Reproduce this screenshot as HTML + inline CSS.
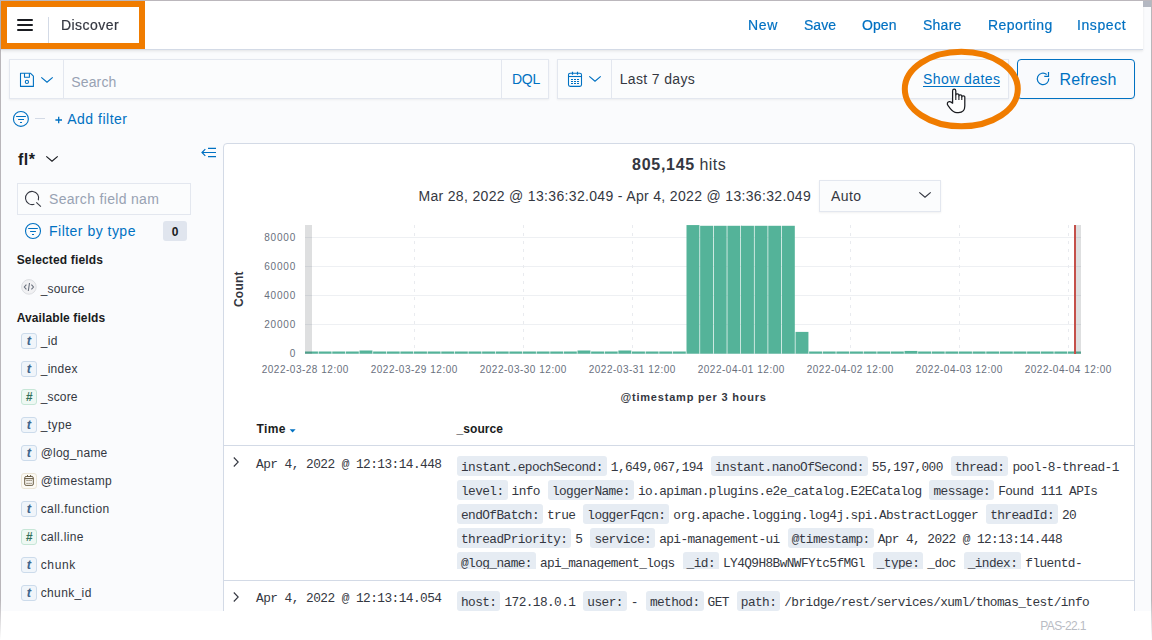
<!DOCTYPE html>
<html><head><meta charset="utf-8"><style>
html,body{margin:0;padding:0;}
body{width:1152px;height:640px;overflow:hidden;position:relative;background:#fafbfd;font-family:'Liberation Sans', sans-serif;}
.t{position:absolute;white-space:pre;line-height:1;}
svg{position:absolute;overflow:visible;}
</style></head><body>
<div style="position:absolute;left:0px;top:0px;width:1152px;height:1px;background:#bcb8bd"></div>
<div style="position:absolute;left:0px;top:0px;width:1px;height:640px;background:linear-gradient(to bottom,#b9b6ba 0,#b9b6ba 600px,#ffffff 640px)"></div>
<div style="position:absolute;left:1151px;top:0px;width:1px;height:640px;background:linear-gradient(to bottom,#b9b6ba 0,#b9b6ba 600px,#ffffff 640px)"></div>
<div style="position:absolute;left:1px;top:1px;width:1142px;height:48px;background:#fff;border-bottom:1px solid #d3dae6;box-shadow:0 1px 2px rgba(0,0,0,.06),0 2px 3px rgba(0,0,0,.03)"></div>
<div style="position:absolute;left:1143px;top:1px;width:8px;height:6px;background:#b4b8c2"></div>
<div style="position:absolute;left:1px;top:1px;width:144px;height:48px;border:6px solid #f07c00;box-sizing:border-box"></div>
<div style="position:absolute;left:17px;top:19px;width:16px;height:2px;background:#1a1c21;border-radius:1px"></div>
<div style="position:absolute;left:17px;top:24px;width:16px;height:2px;background:#1a1c21;border-radius:1px"></div>
<div style="position:absolute;left:17px;top:29px;width:16px;height:2px;background:#1a1c21;border-radius:1px"></div>
<div style="position:absolute;left:48px;top:17px;width:1px;height:26px;background:#d3dae6"></div>
<div style="position:absolute;left:9px;top:59px;width:540px;height:40px;background:#fbfcfd;box-sizing:border-box;border:1px solid #e3e7ef;box-shadow:0 1px 2px rgba(0,0,0,.06)"></div>
<div style="position:absolute;left:63px;top:60px;width:1px;height:38px;background:#e3e7ef"></div>
<div style="position:absolute;left:501px;top:60px;width:1px;height:38px;background:#e3e7ef"></div>
<svg style="left:19px;top:72px;" width="16" height="16" viewBox="0 0 16 16"><g fill="none" stroke="#0071c2" stroke-width="1.1" stroke-linejoin="round"><path d="M1.5 1.3H11.6L14.4 4.1V14.4H1.5Z"/><path d="M5.5 1.3V5.2H10.4V1.3"/><circle cx="7.9" cy="9.9" r="1.6"/></g></svg>
<svg style="left:40px;top:76px;" width="14" height="8" viewBox="0 0 14 8"><path d="M1.3 1.4L7 6.3L12.7 1.4" fill="none" stroke="#0071c2" stroke-width="1.2"/></svg>
<div style="position:absolute;left:557px;top:59px;width:452px;height:40px;background:#fbfcfd;box-sizing:border-box;border:1px solid #e3e7ef;box-shadow:0 1px 2px rgba(0,0,0,.06)"></div>
<div style="position:absolute;left:611px;top:60px;width:1px;height:38px;background:#e3e7ef"></div>
<svg style="left:567px;top:71px;" width="16" height="17" viewBox="0 0 16 17"><g fill="none" stroke="#0071c2" stroke-width="1.1"><rect x="1.5" y="2.3" width="13" height="13.1" rx="1.6"/><path d="M1.5 5.5H14.5"/><path d="M5.5 0.8V3.8M10.5 0.8V3.8" stroke-width="1.2"/></g><g fill="#0071c2"><rect x="4" y="8" width="2" height="1"/><rect x="7" y="8" width="2" height="1"/><rect x="10" y="8" width="2" height="1"/><rect x="4" y="10" width="2" height="1"/><rect x="7" y="10" width="2" height="1"/><rect x="10" y="10" width="2" height="1"/><rect x="4" y="12" width="2" height="1"/><rect x="7" y="12" width="2" height="1"/><rect x="10" y="12" width="2" height="1"/></g></svg>
<svg style="left:588px;top:75px;" width="14" height="8" viewBox="0 0 14 8"><path d="M1.3 1.4L7 6.3L12.7 1.4" fill="none" stroke="#0071c2" stroke-width="1.2"/></svg>
<div style="position:absolute;left:923px;top:86px;width:77px;height:1px;background:#0071c2"></div>
<div style="position:absolute;left:1017px;top:59px;width:118px;height:40px;border:1px solid #0071c2;border-radius:4px;box-sizing:border-box;background:#f9fafd;box-shadow:0 1px 2px rgba(0,0,0,.06)"></div>
<svg style="left:1035px;top:70px;" width="16" height="16" viewBox="0 0 16 16"><g fill="none" stroke="#0071c2" stroke-width="1.2"><path d="M11.7 4.5A5.75 5.75 0 1 0 13.73 8.4"/><path d="M9.25 6.4H13.5V2.1"/></g></svg>
<svg style="left:12px;top:110px;" width="18" height="18" viewBox="0 0 18 18"><g fill="none" stroke="#0071c2" stroke-width="1.1"><circle cx="8.9" cy="8.9" r="7.45"/><path d="M4.1 6.5H13.9M6.1 9.5H12M8 12.5H10"/></g></svg>
<div style="position:absolute;left:35px;top:118px;width:10px;height:1px;background:#d3dae6"></div>
<svg style="left:54px;top:115px;" width="10" height="10" viewBox="0 0 10 10"><path d="M1.4 5H8M4.7 1.7V8.3" fill="none" stroke="#0071c2" stroke-width="1.3"/></svg>
<svg style="left:45px;top:155px;" width="14" height="8" viewBox="0 0 14 8"><path d="M1.3 1.4L7 6.3L12.7 1.4" fill="none" stroke="#1a1c21" stroke-width="1.2"/></svg>
<svg style="left:200px;top:146px;" width="18" height="13" viewBox="0 0 18 13"><g fill="none" stroke="#0071c2" stroke-width="1.2"><path d="M8 2.3H16M2 6.5H16M8 10.6H16"/><path d="M5.3 3.2L2 6.5L5.3 9.8"/></g></svg>
<div style="position:absolute;left:17px;top:183px;width:174px;height:32px;background:#fbfcfd;box-sizing:border-box;border:1px solid #e3e7ef"></div>
<svg style="left:24px;top:190px;" width="18" height="18" viewBox="0 0 18 18"><g fill="none" stroke="#343741" stroke-width="1.1"><path d="M10.36 14.2A6.6 6.6 0 1 1 14.3 10.26"/><path d="M12.3 12.3L16.9 16.7"/></g></svg>
<svg style="left:24px;top:222px;" width="18" height="18" viewBox="0 0 18 18"><g fill="none" stroke="#0071c2" stroke-width="1.1"><circle cx="9" cy="9" r="7.5"/><path d="M4.2 6.5H13.8M6.1 9.5H11.9M8 12.5H10"/></g></svg>
<div style="position:absolute;left:163px;top:221px;width:24px;height:20px;background:#e0e5ee;border-radius:3px"></div>
<svg style="left:20px;top:278px;" width="18" height="18" viewBox="0 0 18 18"><circle cx="8.9" cy="8.9" r="7.3" fill="#f1f1f3" stroke="#dcdee2" stroke-width="1"/><g fill="none" stroke="#69707d" stroke-width="1.1"><path d="M6.4 6.6L4.3 9L6.4 11.4M11.4 6.6L13.5 9L11.4 11.4M9.5 5L8.3 13"/></g></svg>
<div style="position:absolute;left:21px;top:333px;width:16px;height:16px;background:#f0f5fa;border:1px solid #ccdbeb;border-radius:3px;box-sizing:border-box"></div>
<div style="position:absolute;left:21px;top:361px;width:16px;height:16px;background:#f0f5fa;border:1px solid #ccdbeb;border-radius:3px;box-sizing:border-box"></div>
<div style="position:absolute;left:21px;top:389px;width:16px;height:16px;background:#eef8f3;border:1px solid #c6e6d7;border-radius:3px;box-sizing:border-box"></div>
<div style="position:absolute;left:21px;top:417px;width:16px;height:16px;background:#f0f5fa;border:1px solid #ccdbeb;border-radius:3px;box-sizing:border-box"></div>
<div style="position:absolute;left:21px;top:445px;width:16px;height:16px;background:#f0f5fa;border:1px solid #ccdbeb;border-radius:3px;box-sizing:border-box"></div>
<div style="position:absolute;left:21px;top:473px;width:16px;height:16px;background:#fbf9f4;border:1px solid #ebe4d4;border-radius:3px;box-sizing:border-box"></div>
<svg style="left:21px;top:473px;" width="16" height="16" viewBox="0 0 16 16"><g fill="none" stroke="#6b5e47" stroke-width="1"><rect x="3.7" y="3.5" width="8.6" height="8.9" rx="1.4"/><path d="M3.7 5.6H12.3" stroke-width="1.1"/><path d="M6.5 2V4M9.6 2V4"/></g><g fill="#6b5e47"><rect x="5.5" y="7" width="1.1" height="1.1"/><rect x="7.5" y="7" width="1.1" height="1.1"/><rect x="9.5" y="7" width="1.1" height="1.1"/><rect x="5.5" y="9.8" width="1.1" height="1.1"/><rect x="7.5" y="9.8" width="1.1" height="1.1"/><rect x="9.5" y="9.8" width="1.1" height="1.1"/></g></svg>
<div style="position:absolute;left:21px;top:501px;width:16px;height:16px;background:#f0f5fa;border:1px solid #ccdbeb;border-radius:3px;box-sizing:border-box"></div>
<div style="position:absolute;left:21px;top:529px;width:16px;height:16px;background:#eef8f3;border:1px solid #c6e6d7;border-radius:3px;box-sizing:border-box"></div>
<div style="position:absolute;left:21px;top:557px;width:16px;height:16px;background:#f0f5fa;border:1px solid #ccdbeb;border-radius:3px;box-sizing:border-box"></div>
<div style="position:absolute;left:21px;top:585px;width:16px;height:16px;background:#f0f5fa;border:1px solid #ccdbeb;border-radius:3px;box-sizing:border-box"></div>
<div style="position:absolute;left:223px;top:143px;width:912px;height:520px;background:#fff;border:1px solid #d3dae6;border-radius:4px;box-sizing:border-box"></div>
<div style="position:absolute;left:819px;top:180px;width:122px;height:32px;background:#fbfcfd;box-sizing:border-box;border:1px solid #e3e7ef;box-shadow:0 1px 2px rgba(0,0,0,.06)"></div>
<svg style="left:918px;top:191px;" width="14" height="8" viewBox="0 0 14 8"><path d="M1.3 1.4L7 6.3L12.7 1.4" fill="none" stroke="#343741" stroke-width="1.2"/></svg>
<div style="position:absolute;left:305px;top:324.0px;width:776px;height:1px;background:#eef0f3"></div>
<div style="position:absolute;left:305px;top:295.0px;width:776px;height:1px;background:#eef0f3"></div>
<div style="position:absolute;left:305px;top:266.0px;width:776px;height:1px;background:#eef0f3"></div>
<div style="position:absolute;left:305px;top:237.0px;width:776px;height:1px;background:#eef0f3"></div>
<div style="position:absolute;left:305px;top:353px;width:776px;height:1px;background:#eef0f3"></div>
<div style="position:absolute;left:413.5px;top:225px;width:1px;height:128px;background:repeating-linear-gradient(to bottom,#e9ebef 0 3px,transparent 3px 8px)"></div>
<div style="position:absolute;left:522.5px;top:225px;width:1px;height:128px;background:repeating-linear-gradient(to bottom,#e9ebef 0 3px,transparent 3px 8px)"></div>
<div style="position:absolute;left:631.5px;top:225px;width:1px;height:128px;background:repeating-linear-gradient(to bottom,#e9ebef 0 3px,transparent 3px 8px)"></div>
<div style="position:absolute;left:740.5px;top:225px;width:1px;height:128px;background:repeating-linear-gradient(to bottom,#e9ebef 0 3px,transparent 3px 8px)"></div>
<div style="position:absolute;left:849.5px;top:225px;width:1px;height:128px;background:repeating-linear-gradient(to bottom,#e9ebef 0 3px,transparent 3px 8px)"></div>
<div style="position:absolute;left:958.5px;top:225px;width:1px;height:128px;background:repeating-linear-gradient(to bottom,#e9ebef 0 3px,transparent 3px 8px)"></div>
<div style="position:absolute;left:1067.5px;top:225px;width:1px;height:128px;background:repeating-linear-gradient(to bottom,#e9ebef 0 3px,transparent 3px 8px)"></div>
<svg style="left:300px;top:220px;" width="790" height="140" viewBox="0 0 790 140"><g fill="#54b399"><rect x="5.00" y="131.50" width="12.93" height="2.20"/><rect x="18.62" y="131.50" width="12.93" height="2.20"/><rect x="32.25" y="131.50" width="12.93" height="2.20"/><rect x="45.88" y="131.50" width="12.93" height="2.20"/><rect x="59.50" y="130.50" width="12.93" height="3.20"/><rect x="73.12" y="131.50" width="12.93" height="2.20"/><rect x="86.75" y="131.50" width="12.93" height="2.20"/><rect x="100.38" y="131.50" width="12.93" height="2.20"/><rect x="114.00" y="131.50" width="12.93" height="2.20"/><rect x="127.62" y="131.50" width="12.93" height="2.20"/><rect x="141.25" y="131.50" width="12.93" height="2.20"/><rect x="154.88" y="131.50" width="12.93" height="2.20"/><rect x="168.50" y="131.50" width="12.93" height="2.20"/><rect x="182.12" y="131.50" width="12.93" height="2.20"/><rect x="195.75" y="131.50" width="12.93" height="2.20"/><rect x="209.38" y="131.50" width="12.93" height="2.20"/><rect x="223.00" y="131.50" width="12.93" height="2.20"/><rect x="236.62" y="131.50" width="12.93" height="2.20"/><rect x="250.25" y="131.50" width="12.93" height="2.20"/><rect x="263.88" y="131.50" width="12.93" height="2.20"/><rect x="277.50" y="130.50" width="12.93" height="3.20"/><rect x="291.12" y="131.50" width="12.93" height="2.20"/><rect x="304.75" y="131.50" width="12.93" height="2.20"/><rect x="318.38" y="130.50" width="12.93" height="3.20"/><rect x="332.00" y="131.50" width="12.93" height="2.20"/><rect x="345.62" y="131.50" width="12.93" height="2.20"/><rect x="359.25" y="131.50" width="12.93" height="2.20"/><rect x="372.88" y="131.50" width="12.93" height="2.20"/><rect x="386.50" y="5.07" width="12.93" height="128.63"/><rect x="400.12" y="5.79" width="12.93" height="127.91"/><rect x="413.75" y="5.79" width="12.93" height="127.91"/><rect x="427.38" y="5.79" width="12.93" height="127.91"/><rect x="441.00" y="5.79" width="12.93" height="127.91"/><rect x="454.62" y="5.79" width="12.93" height="127.91"/><rect x="468.25" y="5.79" width="12.93" height="127.91"/><rect x="481.88" y="5.79" width="12.93" height="127.91"/><rect x="495.50" y="111.90" width="12.93" height="21.80"/><rect x="509.12" y="131.50" width="12.93" height="2.20"/><rect x="522.75" y="131.50" width="12.93" height="2.20"/><rect x="536.38" y="131.50" width="12.93" height="2.20"/><rect x="550.00" y="131.50" width="12.93" height="2.20"/><rect x="563.62" y="131.50" width="12.93" height="2.20"/><rect x="577.25" y="131.50" width="12.93" height="2.20"/><rect x="590.88" y="131.50" width="12.93" height="2.20"/><rect x="604.50" y="130.94" width="12.93" height="2.76"/><rect x="618.12" y="131.50" width="12.93" height="2.20"/><rect x="631.75" y="131.50" width="12.93" height="2.20"/><rect x="645.38" y="131.50" width="12.93" height="2.20"/><rect x="659.00" y="131.50" width="12.93" height="2.20"/><rect x="672.62" y="131.50" width="12.93" height="2.20"/><rect x="686.25" y="131.50" width="12.93" height="2.20"/><rect x="699.88" y="131.50" width="12.93" height="2.20"/><rect x="713.50" y="131.50" width="12.93" height="2.20"/><rect x="727.12" y="131.50" width="12.93" height="2.20"/><rect x="740.75" y="131.50" width="12.93" height="2.20"/><rect x="754.38" y="131.50" width="12.93" height="2.20"/><rect x="768.00" y="131.50" width="12.93" height="2.20"/></g></svg>
<div style="position:absolute;left:305px;top:225px;width:7px;height:129px;background:rgba(52,55,65,.16)"></div>
<div style="position:absolute;left:1076px;top:225px;width:5px;height:129px;background:rgba(52,55,65,.16)"></div>
<div style="position:absolute;left:1074px;top:225px;width:2px;height:129px;background:#c4504a"></div>
<svg style="left:288px;top:427px;" width="10" height="8" viewBox="0 0 10 8"><path d="M1.6 2.2H7.6L4.6 5.6Z" fill="#0071c2"/></svg>
<div style="position:absolute;left:224px;top:445px;width:910px;height:1px;background:#d3dae6"></div>
<div style="position:absolute;left:457px;top:456px;width:676px;height:113px;overflow:hidden;font-family:'Liberation Mono',monospace;font-size:12.8px;letter-spacing:-0.590px;color:#343741;"><div style="position:absolute;left:0;top:0px;white-space:pre;height:20px"><span style="display:inline-block;vertical-align:top;height:20px;line-height:24.6px;padding:0 4px;margin-right:4px;background:#e6ecf3;border-radius:3px">instant.epochSecond:</span><span style="display:inline-block;vertical-align:top;height:20px;line-height:24.6px;margin-right:8px">1,649,067,194</span><span style="display:inline-block;vertical-align:top;height:20px;line-height:24.6px;padding:0 4px;margin-right:4px;background:#e6ecf3;border-radius:3px">instant.nanoOfSecond:</span><span style="display:inline-block;vertical-align:top;height:20px;line-height:24.6px;margin-right:8px">55,197,000</span><span style="display:inline-block;vertical-align:top;height:20px;line-height:24.6px;padding:0 4px;margin-right:4px;background:#e6ecf3;border-radius:3px">thread:</span><span style="display:inline-block;vertical-align:top;height:20px;line-height:24.6px;margin-right:8px">pool-8-thread-1</span></div><div style="position:absolute;left:0;top:24px;white-space:pre;height:20px"><span style="display:inline-block;vertical-align:top;height:20px;line-height:24.6px;padding:0 4px;margin-right:4px;background:#e6ecf3;border-radius:3px">level:</span><span style="display:inline-block;vertical-align:top;height:20px;line-height:24.6px;margin-right:8px">info</span><span style="display:inline-block;vertical-align:top;height:20px;line-height:24.6px;padding:0 4px;margin-right:4px;background:#e6ecf3;border-radius:3px">loggerName:</span><span style="display:inline-block;vertical-align:top;height:20px;line-height:24.6px;margin-right:8px">io.apiman.plugins.e2e_catalog.E2ECatalog</span><span style="display:inline-block;vertical-align:top;height:20px;line-height:24.6px;padding:0 4px;margin-right:4px;background:#e6ecf3;border-radius:3px">message:</span><span style="display:inline-block;vertical-align:top;height:20px;line-height:24.6px;margin-right:8px">Found 111 APIs</span></div><div style="position:absolute;left:0;top:48px;white-space:pre;height:20px"><span style="display:inline-block;vertical-align:top;height:20px;line-height:24.6px;padding:0 4px;margin-right:4px;background:#e6ecf3;border-radius:3px">endOfBatch:</span><span style="display:inline-block;vertical-align:top;height:20px;line-height:24.6px;margin-right:8px">true</span><span style="display:inline-block;vertical-align:top;height:20px;line-height:24.6px;padding:0 4px;margin-right:4px;background:#e6ecf3;border-radius:3px">loggerFqcn:</span><span style="display:inline-block;vertical-align:top;height:20px;line-height:24.6px;margin-right:8px">org.apache.logging.log4j.spi.AbstractLogger</span><span style="display:inline-block;vertical-align:top;height:20px;line-height:24.6px;padding:0 4px;margin-right:4px;background:#e6ecf3;border-radius:3px">threadId:</span><span style="display:inline-block;vertical-align:top;height:20px;line-height:24.6px;margin-right:8px">20</span></div><div style="position:absolute;left:0;top:72px;white-space:pre;height:20px"><span style="display:inline-block;vertical-align:top;height:20px;line-height:24.6px;padding:0 4px;margin-right:4px;background:#e6ecf3;border-radius:3px">threadPriority:</span><span style="display:inline-block;vertical-align:top;height:20px;line-height:24.6px;margin-right:8px">5</span><span style="display:inline-block;vertical-align:top;height:20px;line-height:24.6px;padding:0 4px;margin-right:4px;background:#e6ecf3;border-radius:3px">service:</span><span style="display:inline-block;vertical-align:top;height:20px;line-height:24.6px;margin-right:8px">api-management-ui</span><span style="display:inline-block;vertical-align:top;height:20px;line-height:24.6px;padding:0 4px;margin-right:4px;background:#e6ecf3;border-radius:3px">@timestamp:</span><span style="display:inline-block;vertical-align:top;height:20px;line-height:24.6px;margin-right:8px">Apr 4, 2022 @ 12:13:14.448</span></div><div style="position:absolute;left:0;top:96px;white-space:pre;height:20px"><span style="display:inline-block;vertical-align:top;height:20px;line-height:24.6px;padding:0 4px;margin-right:4px;background:#e6ecf3;border-radius:3px">@log_name:</span><span style="display:inline-block;vertical-align:top;height:20px;line-height:24.6px;margin-right:8px">api_management_logs</span><span style="display:inline-block;vertical-align:top;height:20px;line-height:24.6px;padding:0 4px;margin-right:4px;background:#e6ecf3;border-radius:3px">_id:</span><span style="display:inline-block;vertical-align:top;height:20px;line-height:24.6px;margin-right:8px">LY4Q9H8BwNWFYtc5fMGl</span><span style="display:inline-block;vertical-align:top;height:20px;line-height:24.6px;padding:0 4px;margin-right:4px;background:#e6ecf3;border-radius:3px">_type:</span><span style="display:inline-block;vertical-align:top;height:20px;line-height:24.6px;margin-right:8px">_doc</span><span style="display:inline-block;vertical-align:top;height:20px;line-height:24.6px;padding:0 4px;margin-right:4px;background:#e6ecf3;border-radius:3px">_index:</span><span style="display:inline-block;vertical-align:top;height:20px;line-height:24.6px;margin-right:8px">fluentd-</span></div></div>
<div style="position:absolute;left:457px;top:591px;width:676px;height:40px;overflow:hidden;font-family:'Liberation Mono',monospace;font-size:12.8px;letter-spacing:-0.590px;color:#343741;"><div style="position:absolute;left:0;top:0;white-space:pre;height:20px"><span style="display:inline-block;vertical-align:top;height:20px;line-height:24.6px;padding:0 4px;margin-right:4px;background:#e6ecf3;border-radius:3px">host:</span><span style="display:inline-block;vertical-align:top;height:20px;line-height:24.6px;margin-right:8px">172.18.0.1</span><span style="display:inline-block;vertical-align:top;height:20px;line-height:24.6px;padding:0 4px;margin-right:4px;background:#e6ecf3;border-radius:3px">user:</span><span style="display:inline-block;vertical-align:top;height:20px;line-height:24.6px;margin-right:8px">-</span><span style="display:inline-block;vertical-align:top;height:20px;line-height:24.6px;padding:0 4px;margin-right:4px;background:#e6ecf3;border-radius:3px">method:</span><span style="display:inline-block;vertical-align:top;height:20px;line-height:24.6px;margin-right:8px">GET</span><span style="display:inline-block;vertical-align:top;height:20px;line-height:24.6px;padding:0 4px;margin-right:4px;background:#e6ecf3;border-radius:3px">path:</span><span style="display:inline-block;vertical-align:top;height:20px;line-height:24.6px;margin-right:8px">/bridge/rest/services/xuml/thomas_test/info</span></div></div>
<svg style="left:231px;top:455px;" width="10" height="14" viewBox="0 0 10 14"><path d="M2.8 2.5L7.2 7L2.8 11.5" fill="none" stroke="#343741" stroke-width="1.1"/></svg>
<svg style="left:231px;top:590px;" width="10" height="14" viewBox="0 0 10 14"><path d="M2.8 2.5L7.2 7L2.8 11.5" fill="none" stroke="#343741" stroke-width="1.1"/></svg>
<div style="position:absolute;left:224px;top:580px;width:910px;height:1px;background:#d3dae6"></div>
<div style="position:absolute;left:1px;top:611px;width:1150px;height:29px;background:#fff"></div>
<div class="t" style="left:232.5px;top:306.5px;font-family:'Liberation Sans',sans-serif;font-size:12px;font-weight:700;color:#343741;line-height:12px;transform:rotate(-90deg);transform-origin:0 0;letter-spacing:0.2px">Count</div>
<div class="t" style="left:61.30px;top:18.15px;font-family:'Liberation Sans', sans-serif;font-size:14px;font-weight:400;color:#343741;letter-spacing:0.441px;will-change:transform;-webkit-text-stroke:0.2px #343741;">Discover</div>
<div class="t" style="left:748.13px;top:18.15px;font-family:'Liberation Sans', sans-serif;font-size:14px;font-weight:400;color:#0071c2;letter-spacing:0.661px;will-change:transform;-webkit-text-stroke:0.2px #0071c2;">New</div>
<div class="t" style="left:804.01px;top:18.15px;font-family:'Liberation Sans', sans-serif;font-size:14px;font-weight:400;color:#0071c2;letter-spacing:0.020px;will-change:transform;-webkit-text-stroke:0.2px #0071c2;">Save</div>
<div class="t" style="left:861.94px;top:18.15px;font-family:'Liberation Sans', sans-serif;font-size:14px;font-weight:400;color:#0071c2;letter-spacing:0.088px;will-change:transform;-webkit-text-stroke:0.2px #0071c2;">Open</div>
<div class="t" style="left:923.02px;top:18.15px;font-family:'Liberation Sans', sans-serif;font-size:14px;font-weight:400;color:#0071c2;letter-spacing:0.248px;will-change:transform;-webkit-text-stroke:0.2px #0071c2;">Share</div>
<div class="t" style="left:987.52px;top:18.15px;font-family:'Liberation Sans', sans-serif;font-size:14px;font-weight:400;color:#0071c2;letter-spacing:0.433px;will-change:transform;-webkit-text-stroke:0.2px #0071c2;">Reporting</div>
<div class="t" style="left:1077.45px;top:18.15px;font-family:'Liberation Sans', sans-serif;font-size:14px;font-weight:400;color:#0071c2;letter-spacing:0.594px;will-change:transform;-webkit-text-stroke:0.2px #0071c2;">Inspect</div>
<div class="t" style="left:71.20px;top:74.85px;font-family:'Liberation Sans', sans-serif;font-size:14px;font-weight:400;color:#98a2b3;letter-spacing:0.157px;">Search</div>
<div class="t" style="left:511.90px;top:72.15px;font-family:'Liberation Sans', sans-serif;font-size:14px;font-weight:400;color:#0071c2;letter-spacing:-0.232px;">DQL</div>
<div class="t" style="left:619.70px;top:72.15px;font-family:'Liberation Sans', sans-serif;font-size:14px;font-weight:400;color:#343741;letter-spacing:0.345px;">Last 7 days</div>
<div class="t" style="left:923.10px;top:72.45px;font-family:'Liberation Sans', sans-serif;font-size:14px;font-weight:400;color:#0071c2;letter-spacing:0.403px;">Show dates</div>
<div class="t" style="left:1059.50px;top:72.46px;font-family:'Liberation Sans', sans-serif;font-size:16px;font-weight:400;color:#0071c2;letter-spacing:0.138px;">Refresh</div>
<div class="t" style="left:67.20px;top:111.85px;font-family:'Liberation Sans', sans-serif;font-size:14px;font-weight:400;color:#0071c2;letter-spacing:0.505px;">Add filter</div>
<div class="t" style="left:17.90px;top:151.86px;font-family:'Liberation Sans', sans-serif;font-size:16px;font-weight:700;color:#1a1c21;letter-spacing:0.533px;">fl*</div>
<div class="t" style="left:49.00px;top:192.15px;font-family:'Liberation Sans', sans-serif;font-size:14px;font-weight:400;color:#98a2b3;letter-spacing:0.321px;">Search field nam</div>
<div class="t" style="left:49.00px;top:223.85px;font-family:'Liberation Sans', sans-serif;font-size:14px;font-weight:400;color:#0071c2;letter-spacing:0.483px;">Filter by type</div>
<div class="t" style="left:171.66px;top:225.84px;font-family:'Liberation Sans', sans-serif;font-size:12px;font-weight:700;color:#1a1c21;letter-spacing:0.000px;">0</div>
<div class="t" style="left:16.70px;top:254.24px;font-family:'Liberation Sans', sans-serif;font-size:12px;font-weight:700;color:#1a1c21;letter-spacing:0.164px;">Selected fields</div>
<div class="t" style="left:40.70px;top:282.94px;font-family:'Liberation Sans', sans-serif;font-size:12px;font-weight:400;color:#343741;letter-spacing:0.185px;">_source</div>
<div class="t" style="left:16.70px;top:312.44px;font-family:'Liberation Sans', sans-serif;font-size:12px;font-weight:700;color:#1a1c21;letter-spacing:0.104px;">Available fields</div>
<div class="t" style="left:26.83px;top:334.20px;font-family:'Liberation Sans', sans-serif;font-size:13px;font-weight:700;color:#40658c;letter-spacing:0.000px;font-style:italic;">t</div>
<div class="t" style="left:40.70px;top:335.24px;font-family:'Liberation Sans', sans-serif;font-size:12px;font-weight:400;color:#343741;letter-spacing:0.328px;">_id</div>
<div class="t" style="left:26.83px;top:362.20px;font-family:'Liberation Sans', sans-serif;font-size:13px;font-weight:700;color:#40658c;letter-spacing:0.000px;font-style:italic;">t</div>
<div class="t" style="left:40.70px;top:363.24px;font-family:'Liberation Sans', sans-serif;font-size:12px;font-weight:400;color:#343741;letter-spacing:0.271px;">_index</div>
<div class="t" style="left:25.66px;top:391.24px;font-family:'Liberation Sans', sans-serif;font-size:12px;font-weight:700;color:#33705a;letter-spacing:0.000px;font-style:italic;">#</div>
<div class="t" style="left:40.70px;top:391.24px;font-family:'Liberation Sans', sans-serif;font-size:12px;font-weight:400;color:#343741;letter-spacing:0.161px;">_score</div>
<div class="t" style="left:26.83px;top:418.20px;font-family:'Liberation Sans', sans-serif;font-size:13px;font-weight:700;color:#40658c;letter-spacing:0.000px;font-style:italic;">t</div>
<div class="t" style="left:40.70px;top:419.24px;font-family:'Liberation Sans', sans-serif;font-size:12px;font-weight:400;color:#343741;letter-spacing:0.428px;">_type</div>
<div class="t" style="left:26.83px;top:446.20px;font-family:'Liberation Sans', sans-serif;font-size:13px;font-weight:700;color:#40658c;letter-spacing:0.000px;font-style:italic;">t</div>
<div class="t" style="left:40.70px;top:447.24px;font-family:'Liberation Sans', sans-serif;font-size:12px;font-weight:400;color:#343741;letter-spacing:0.212px;">@log_name</div>
<div class="t" style="left:40.70px;top:475.24px;font-family:'Liberation Sans', sans-serif;font-size:12px;font-weight:400;color:#343741;letter-spacing:0.397px;">@timestamp</div>
<div class="t" style="left:26.83px;top:502.20px;font-family:'Liberation Sans', sans-serif;font-size:13px;font-weight:700;color:#40658c;letter-spacing:0.000px;font-style:italic;">t</div>
<div class="t" style="left:40.70px;top:503.24px;font-family:'Liberation Sans', sans-serif;font-size:12px;font-weight:400;color:#343741;letter-spacing:0.433px;">call.function</div>
<div class="t" style="left:25.66px;top:531.24px;font-family:'Liberation Sans', sans-serif;font-size:12px;font-weight:700;color:#33705a;letter-spacing:0.000px;font-style:italic;">#</div>
<div class="t" style="left:40.70px;top:531.24px;font-family:'Liberation Sans', sans-serif;font-size:12px;font-weight:400;color:#343741;letter-spacing:0.352px;">call.line</div>
<div class="t" style="left:26.83px;top:558.20px;font-family:'Liberation Sans', sans-serif;font-size:13px;font-weight:700;color:#40658c;letter-spacing:0.000px;font-style:italic;">t</div>
<div class="t" style="left:40.70px;top:559.24px;font-family:'Liberation Sans', sans-serif;font-size:12px;font-weight:400;color:#343741;letter-spacing:0.634px;">chunk</div>
<div class="t" style="left:26.83px;top:586.20px;font-family:'Liberation Sans', sans-serif;font-size:13px;font-weight:700;color:#40658c;letter-spacing:0.000px;font-style:italic;">t</div>
<div class="t" style="left:40.70px;top:587.24px;font-family:'Liberation Sans', sans-serif;font-size:12px;font-weight:400;color:#343741;letter-spacing:0.369px;">chunk_id</div>
<div class="t" style="left:632.10px;top:157.06px;font-family:'Liberation Sans', sans-serif;font-size:16px;font-weight:700;color:#343741;letter-spacing:0.708px;">805,145</div>
<div class="t" style="left:699.50px;top:157.06px;font-family:'Liberation Sans', sans-serif;font-size:16px;font-weight:400;color:#343741;letter-spacing:0.448px;">hits</div>
<div class="t" style="left:418.40px;top:188.75px;font-family:'Liberation Sans', sans-serif;font-size:14px;font-weight:400;color:#343741;letter-spacing:0.332px;">Mar 28, 2022 @ 13:36:32.049 - Apr 4, 2022 @ 13:36:32.049</div>
<div class="t" style="left:830.90px;top:188.95px;font-family:'Liberation Sans', sans-serif;font-size:14px;font-weight:400;color:#343741;letter-spacing:0.472px;">Auto</div>
<div class="t" style="left:264.20px;top:233.15px;font-family:'Liberation Sans', sans-serif;font-size:10px;font-weight:400;color:#69707d;letter-spacing:0.798px;">80000</div>
<div class="t" style="left:264.20px;top:262.22px;font-family:'Liberation Sans', sans-serif;font-size:10px;font-weight:400;color:#69707d;letter-spacing:0.798px;">60000</div>
<div class="t" style="left:264.20px;top:291.29px;font-family:'Liberation Sans', sans-serif;font-size:10px;font-weight:400;color:#69707d;letter-spacing:0.798px;">40000</div>
<div class="t" style="left:264.20px;top:320.36px;font-family:'Liberation Sans', sans-serif;font-size:10px;font-weight:400;color:#69707d;letter-spacing:0.798px;">20000</div>
<div class="t" style="left:289.64px;top:349.43px;font-family:'Liberation Sans', sans-serif;font-size:10px;font-weight:400;color:#69707d;letter-spacing:1.438px;">0</div>
<div class="t" style="left:261.66px;top:364.83px;font-family:'Liberation Sans', sans-serif;font-size:10px;font-weight:400;color:#69707d;letter-spacing:0.514px;">2022-03-28 12:00</div>
<div class="t" style="left:370.66px;top:364.83px;font-family:'Liberation Sans', sans-serif;font-size:10px;font-weight:400;color:#69707d;letter-spacing:0.514px;">2022-03-29 12:00</div>
<div class="t" style="left:479.66px;top:364.83px;font-family:'Liberation Sans', sans-serif;font-size:10px;font-weight:400;color:#69707d;letter-spacing:0.514px;">2022-03-30 12:00</div>
<div class="t" style="left:588.66px;top:364.83px;font-family:'Liberation Sans', sans-serif;font-size:10px;font-weight:400;color:#69707d;letter-spacing:0.514px;">2022-03-31 12:00</div>
<div class="t" style="left:697.66px;top:364.83px;font-family:'Liberation Sans', sans-serif;font-size:10px;font-weight:400;color:#69707d;letter-spacing:0.514px;">2022-04-01 12:00</div>
<div class="t" style="left:806.66px;top:364.83px;font-family:'Liberation Sans', sans-serif;font-size:10px;font-weight:400;color:#69707d;letter-spacing:0.514px;">2022-04-02 12:00</div>
<div class="t" style="left:915.66px;top:364.83px;font-family:'Liberation Sans', sans-serif;font-size:10px;font-weight:400;color:#69707d;letter-spacing:0.514px;">2022-04-03 12:00</div>
<div class="t" style="left:1024.66px;top:364.83px;font-family:'Liberation Sans', sans-serif;font-size:10px;font-weight:400;color:#69707d;letter-spacing:0.514px;">2022-04-04 12:00</div>
<div class="t" style="left:620.45px;top:392.39px;font-family:'Liberation Sans', sans-serif;font-size:11px;font-weight:700;color:#343741;letter-spacing:0.800px;">@timestamp per 3 hours</div>
<div class="t" style="left:256.50px;top:423.24px;font-family:'Liberation Sans', sans-serif;font-size:12px;font-weight:700;color:#1a1c21;letter-spacing:0.351px;">Time</div>
<div class="t" style="left:456.50px;top:423.24px;font-family:'Liberation Sans', sans-serif;font-size:12px;font-weight:700;color:#1a1c21;letter-spacing:0.081px;">_source</div>
<div class="t" style="left:256.10px;top:459.09px;font-family:'Liberation Mono', monospace;font-size:12.8px;font-weight:400;color:#343741;letter-spacing:-0.549px;">Apr 4, 2022 @ 12:13:14.448</div>
<div class="t" style="left:256.10px;top:593.19px;font-family:'Liberation Mono', monospace;font-size:12.8px;font-weight:400;color:#343741;letter-spacing:-0.549px;">Apr 4, 2022 @ 12:13:14.054</div>
<div class="t" style="left:1040.30px;top:619.74px;font-family:'Liberation Sans', sans-serif;font-size:12px;font-weight:400;color:#b9bcc4;letter-spacing:-0.611px;">PAS-22.1</div>
<svg style="left:890px;top:40px;" width="140" height="100" viewBox="0 0 140 100"><ellipse cx="71.3" cy="49" rx="56.5" ry="37.3" fill="none" stroke="#f07c00" stroke-width="6"/></svg>
<svg style="left:940px;top:84px;" width="32" height="32" viewBox="0 0 32 32"><path d="M12.6 18.6V7C12.6 4.6 15.8 4.6 15.8 7V10.8C15.8 9.4 18.9 9.4 18.9 10.8V11.8C18.9 10.4 21.8 10.4 21.8 11.8V12.8C21.8 11.4 24.8 11.4 24.8 12.8V22C24.8 26.2 22.4 28.6 18.5 28.6H16.8C13.8 28.6 12.2 27.2 10.3 24.7L7.9 21.4C6.6 19.6 7.6 17.4 9.6 17.6C10.9 17.8 11.8 18.4 12.6 19.2Z" fill="#fff" stroke="#1a1c21" stroke-width="1.25" stroke-linejoin="round"/><path d="M15.8 10.8V16M18.9 11.8V16M21.8 12.8V16" fill="none" stroke="#1a1c21" stroke-width="1.1"/></svg>
</body></html>
